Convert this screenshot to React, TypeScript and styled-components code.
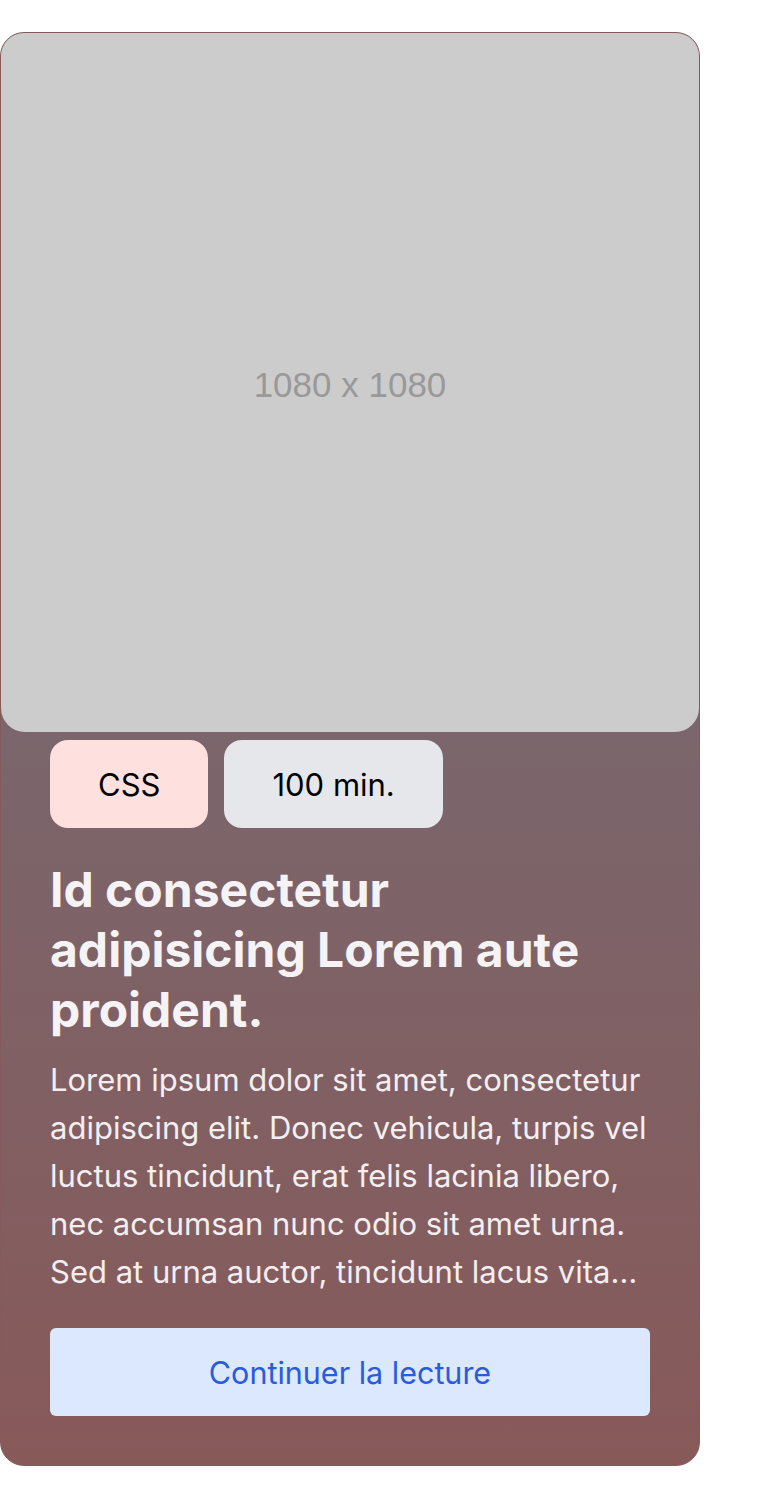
import React from "react";
import styled, { createGlobalStyle } from "styled-components";

const Global = createGlobalStyle`
  html, body { margin: 0; padding: 0; background: #ffffff; }
  body { font-family: Inter, "Noto Sans", sans-serif; }
  * { box-sizing: border-box; }
`;

const Page = styled.div`
  padding: 32px 64px 32px 0;
`;

const Card = styled.article`
  width: 700px;
  border: 1px solid #855a5c;
  border-radius: 24px;
  overflow: hidden;
  background: linear-gradient(to bottom, #6e6f7b 0%, #7a666c 49%, #885959 100%);
  display: flex;
  flex-direction: column;
  padding-bottom: 49px;
`;

const Placeholder = styled.div`
  width: 100%;
  height: 699px;
  background: #cccccc;
  border-radius: 0 0 24px 24px;
  display: flex;
  align-items: center;
  justify-content: center;
  padding-top: 4px;
  font-family: "Liberation Sans", Arial, sans-serif;
  font-size: 35px;
  color: #999999;
`;

const Body = styled.div`
  padding: 8px 49px 0;
  display: flex;
  flex-direction: column;
`;

const Tags = styled.div`
  display: flex;
  gap: 16px;
`;

const Tag = styled.span<{ $bg: string }>`
  display: inline-flex;
  align-items: center;
  justify-content: center;
  height: 88px;
  padding: 0 48px;
  border-radius: 18px;
  background: ${(p) => p.$bg};
  color: #000;
  font-size: 31px;
`;

const Title = styled.h2`
  margin: 32px 0 0;
  font-size: 48px;
  font-weight: 700;
  line-height: 60px;
  color: #f5f3f5;
`;

const Text = styled.p`
  margin: 16px 0 0;
  font-size: 31px;
  line-height: 48px;
  color: #f3eff1;
`;

const Button = styled.button`
  margin-top: 32px;
  height: 88px;
  width: 100%;
  border: none;
  border-radius: 6px;
  background: #dbe8fe;
  color: #2a5bdc;
  font-family: Inter, "Noto Sans", sans-serif;
  font-size: 30.5px;
`;

export default function App() {
  return (
    <>
      <Global />
      <Page>
        <Card>
          <Placeholder>1080 x 1080</Placeholder>
          <Body>
            <Tags>
              <Tag $bg="#fee0df">CSS</Tag>
              <Tag $bg="#e5e7eb">100 min.</Tag>
            </Tags>
            <Title>Id consectetur adipisicing Lorem aute proident.</Title>
            <Text>
              Lorem ipsum dolor sit amet, consectetur adipiscing elit. Donec vehicula, turpis vel luctus tincidunt, erat felis lacinia libero, nec accumsan nunc odio sit amet urna. Sed at urna auctor, tincidunt lacus vita…
            </Text>
            <Button>Continuer la lecture</Button>
          </Body>
        </Card>
      </Page>
    </>
  );
}
